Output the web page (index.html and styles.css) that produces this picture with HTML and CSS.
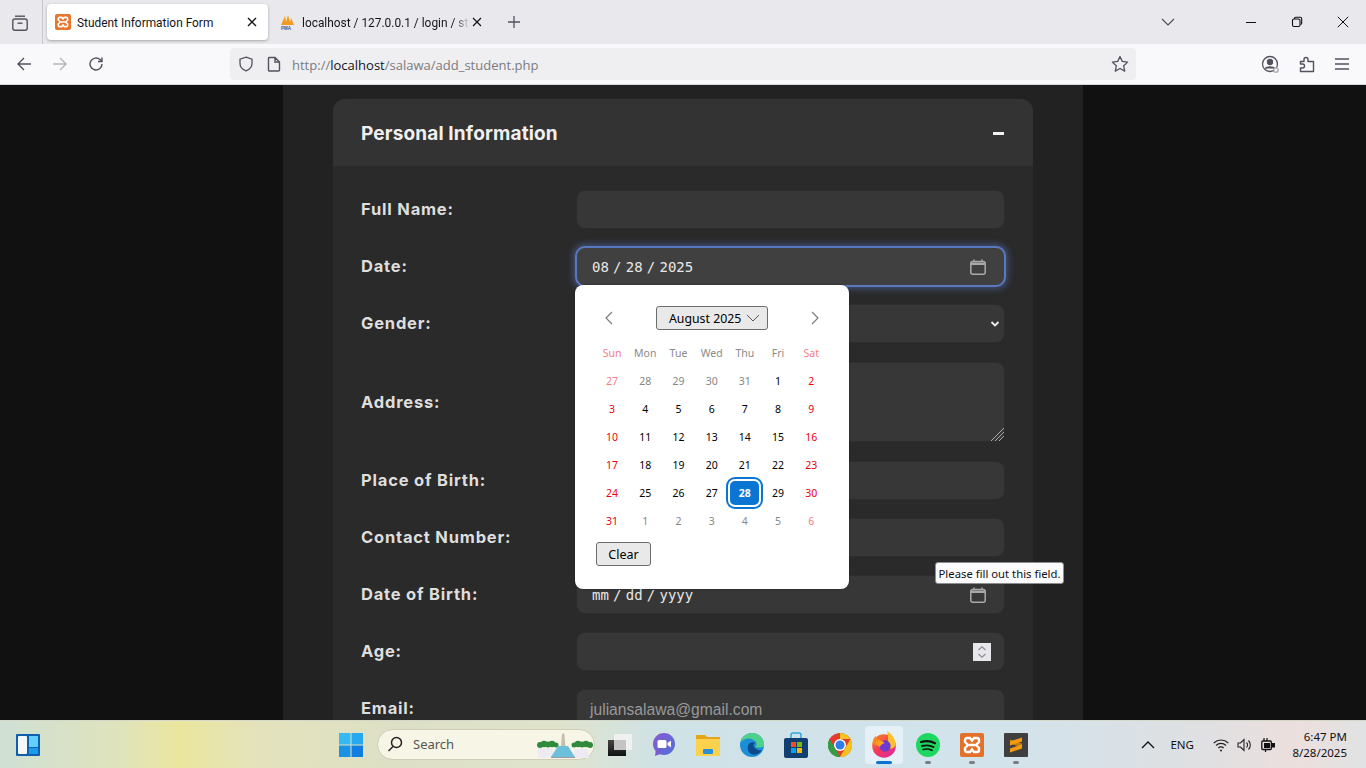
FILE: index.html
```html
<!DOCTYPE html>
<html lang="en">
<head>
<meta charset="utf-8">
<title>Student Information Form</title>
<link rel="stylesheet" href="styles.css">
</head>
<body>
<header class="tabbar">
  <div class="tabs-btn">
    <svg width="18" height="18" viewBox="0 0 18 18" fill="none" stroke="#52525e" stroke-width="1.4"><path d="M4 2.2h10"/><rect x="1.8" y="5" width="14.4" height="11.2" rx="2"/><path d="M6.5 9.2h5"/></svg>
  </div>
  <div class="tab active">
    <svg class="favicon" width="16" height="16" viewBox="0 0 24 24"><rect width="24" height="24" rx="3" fill="#e8762d"/><path d="M7 5h3l2 2.500L14 5h3a2 2 0 0 1 2 2v2l-3 3 3 3v2a2 2 0 0 1-2 2h-3l-2-2.500L10 19H7a2 2 0 0 1-2-2v-2l3-3-3-3V7a2 2 0 0 1 2-2zM9 12h6" fill="none" stroke="#fff" stroke-width="2.400"/></svg>
    <span class="tab-title">Student Information Form</span>
    <svg class="tab-x" width="10" height="10" viewBox="0 0 10 10" stroke="#15141a" stroke-width="1.400"><path d="M1 1l8 8M9 1l-8 8"/></svg>
  </div>
  <div class="tab plain">
    <svg class="favicon" width="16" height="16" viewBox="0 0 16 16"><path d="M1 11L5 2l1 6 2-7 2 7 1-4 3 7z" fill="#f29a1f"/><text x="1" y="15.500" class="pma">PMA</text></svg>
    <span class="tab-title clip">localhost / 127.0.0.1 / login / stu</span>
    <svg class="tab-x" width="10" height="10" viewBox="0 0 10 10" stroke="#15141a" stroke-width="1.200"><path d="M1 1l8 8M9 1l-8 8"/></svg>
  </div>
  <div class="newtab"><svg width="14" height="14" viewBox="0 0 14 14" stroke="#52525e" stroke-width="1.300"><path d="M7 1v12M1 7h12"/></svg></div>
  <div class="tabbar-fill"></div>
  <svg class="listall" width="14" height="8" viewBox="0 0 14 8" fill="none" stroke="#52525e" stroke-width="1.200"><path d="M1 1l6 6 6-6"/></svg>
  <div class="winctl">
    <svg width="12" height="12" viewBox="0 0 12 12" stroke="#111" stroke-width="1"><path d="M1 6.500h10"/></svg>
    <svg width="12" height="12" viewBox="0 0 12 12" fill="none" stroke="#111" stroke-width="1.100"><rect x="1.500" y="3" width="7.500" height="7.500" rx="1.500"/><path d="M3.500 3V2.500a1.200 1.200 0 0 1 1.200-1.200h4.500a1.500 1.500 0 0 1 1.500 1.500v4.500a1.200 1.200 0 0 1-1.200 1.200"/></svg>
    <svg width="12" height="12" viewBox="0 0 12 12" stroke="#111" stroke-width="1"><path d="M.8.800l10.400 10.400M11.200.800L.8 11.200"/></svg>
  </div>
</header>

<nav class="toolbar">
  <div class="navbtns">
    <svg width="16" height="16" viewBox="0 0 16 16" fill="none" stroke="#52525e" stroke-width="1.400"><path d="M15 8H2M8 2L2 8l6 6"/></svg>
    <svg width="16" height="16" viewBox="0 0 16 16" fill="none" stroke="#b4b4ba" stroke-width="1.400"><path d="M1 8h13M8 2l6 6-6 6"/></svg>
    <svg width="16" height="16" viewBox="0 0 16 16" fill="none" stroke="#52525e" stroke-width="1.400"><path d="M14 8a6 6 0 1 1-2-4.500L14 5.500M14 1.500v4h-4"/></svg>
  </div>
  <div class="urlbar">
    <svg class="shield" width="16" height="16" viewBox="0 0 16 16" fill="none" stroke="#52525e" stroke-width="1.300"><path d="M8 1.200l6 2v4.300c0 3.500-2.600 6-6 7.300-3.400-1.300-6-3.800-6-7.300V3.200z"/></svg>
    <svg class="page" width="14" height="16" viewBox="0 0 14 16" fill="none" stroke="#52525e" stroke-width="1.400"><path d="M2 1.500h6l4.500 4.500v8a1 1 0 0 1-1 1H2.500a1 1 0 0 1-1-1V2a.5.500 0 0 1 .5-.5zM8 1.500V6h4.500"/></svg>
    <span class="url">http://<b>localhost</b>/salawa/add_student.php</span>
    <svg class="star" width="18" height="18" viewBox="0 0 18 18" fill="none" stroke="#52525e" stroke-width="1.300" stroke-linejoin="round"><path d="M9 1.500l2.300 4.900 5.300.7-3.900 3.700 1 5.300L9 13.500l-4.700 2.600 1-5.300L1.400 7.100l5.300-.7z"/></svg>
  </div>
  <div class="tools">
    <svg width="18" height="18" viewBox="0 0 18 18" fill="none" stroke="#52525e" stroke-width="1.300"><circle cx="9" cy="9" r="7.500"/><circle cx="9" cy="7" r="2.500" fill="#52525e"/><path d="M4.500 13.500c1-2 8-2 9 0" fill="#52525e"/><circle cx="15" cy="15" r="2.200" fill="#f9f9fb" stroke="#a8a8ae"/></svg>
    <svg width="16" height="18" viewBox="0 0 16 18" fill="none" stroke="#52525e" stroke-width="1.400" stroke-linejoin="round"><path d="M1.500 6.500h3.500V4.500a2 2 0 0 1 4 0v2h5.500v10H1.500v-3.500h2a2 2 0 0 0 0-4h-2z"/></svg>
    <svg width="14" height="12" viewBox="0 0 14 12" stroke="#52525e" stroke-width="1.300"><path d="M0 1h14M0 6h14M0 11h14"/></svg>
  </div>
</nav>

<main class="viewport">
  <div class="container">
    <section class="card">
      <div class="card-head"><h2>Personal Information</h2><span class="collapse"></span></div>
      <form class="card-body">
        <div class="row"><label>Full Name:</label><div class="field"></div></div>
        <div class="row"><label>Date:</label><div class="field focused"><span class="dt">08 / 28 / 2025</span><svg class="cal" width="16" height="16" viewBox="0 0 16 16" fill="none" stroke="#a9a9a9" stroke-width="1.500"><rect x=".8" y="2.500" width="14.400" height="12.700" rx="2"/><path d="M1 3.500h14V6H1z" fill="#a9a9a9" stroke="none"/><path d="M4 .5v2.500M12 .5v2.500"/></svg></div></div>
        <div class="row gap-more"><label>Gender:</label><div class="field"><svg class="sel" width="10" height="8" viewBox="0 0 10 8" fill="none" stroke="#eee" stroke-width="1.800"><path d="M1.500 2L5 5.500 8.500 2"/></svg></div></div>
        <div class="row tall"><label>Address:</label><div class="field area"><svg class="grip" width="14" height="14" viewBox="0 0 14 14" stroke="#aaa" stroke-width="1"><path d="M1 14L14 1M5 14L14 5M9 14l5-5"/></svg></div></div>
        <div class="row"><label>Place of Birth:</label><div class="field"></div></div>
        <div class="row"><label>Contact Number:</label><div class="field"></div></div>
        <div class="row"><label>Date of Birth:</label><div class="field"><span class="dt">mm / dd / yyyy</span><svg class="cal" width="16" height="16" viewBox="0 0 16 16" fill="none" stroke="#a9a9a9" stroke-width="1.500"><rect x=".8" y="2.500" width="14.400" height="12.700" rx="2"/><path d="M1 3.500h14V6H1z" fill="#a9a9a9" stroke="none"/><path d="M4 .5v2.500M12 .5v2.500"/></svg></div></div>
        <div class="row"><label>Age:</label><div class="field"><span class="spin"><svg width="10" height="14" viewBox="0 0 10 14" fill="none" stroke="#8e8e96" stroke-width="1.300"><path d="M1.500 5L5 1.800 8.500 5M1.500 9L5 12.200 8.500 9"/></svg></span></div></div>
        <div class="row"><label>Email:</label><div class="field"><span class="ph">juliansalawa@gmail.com</span></div></div>
      </form>
    </section>
  </div>

  <div class="picker">
    <div class="pick-head">
      <svg width="9" height="14" viewBox="0 0 9 14" fill="none" stroke="#7c7c7c" stroke-width="1.200"><path d="M8 1L2 7l6 6"/></svg>
      <div class="month">August 2025<svg width="14" height="8" viewBox="0 0 14 8" fill="none" stroke="#555" stroke-width="1"><path d="M1 1l6 6 6-6"/></svg></div>
      <svg width="9" height="14" viewBox="0 0 9 14" fill="none" stroke="#7c7c7c" stroke-width="1.200"><path d="M1 1l6 6-6 6"/></svg>
    </div>
    <div class="cal-grid">
      <span class="dow we">Sun</span><span class="dow">Mon</span><span class="dow">Tue</span><span class="dow">Wed</span><span class="dow">Thu</span><span class="dow">Fri</span><span class="dow we">Sat</span>
      <span class="oe">27</span><span class="o">28</span><span class="o">29</span><span class="o">30</span><span class="o">31</span><span>1</span><span class="we">2</span>
      <span class="we">3</span><span>4</span><span>5</span><span>6</span><span>7</span><span>8</span><span class="we">9</span>
      <span class="we">10</span><span>11</span><span>12</span><span>13</span><span>14</span><span>15</span><span class="we">16</span>
      <span class="we">17</span><span>18</span><span>19</span><span>20</span><span>21</span><span>22</span><span class="we">23</span>
      <span class="we">24</span><span>25</span><span>26</span><span>27</span><span class="sel-day">28</span><span>29</span><span class="we">30</span>
      <span class="we">31</span><span class="o">1</span><span class="o">2</span><span class="o">3</span><span class="o">4</span><span class="o">5</span><span class="oe">6</span>
    </div>
    <div class="clear">Clear</div>
  </div>
  <div class="tooltip">Please fill out this field.</div>
</main>

<footer class="taskbar">
  <svg class="widgets" width="24" height="22" viewBox="0 0 24 22"><rect width="24" height="22" rx="1" fill="#0f5fae"/><rect x="2" y="2" width="9" height="18" rx="1" fill="#f5f7fa"/><rect x="13" y="2" width="9" height="11" fill="#63d0fb"/><rect x="13" y="14" width="9" height="6" fill="#1a9cec"/></svg>
  <div class="task-center">
    <svg class="winlogo" width="24" height="24" viewBox="0 0 24 24"><rect width="11.500" height="11.500" fill="#35b8f4"/><rect x="12.500" width="11.500" height="11.500" fill="#28a8ee"/><rect y="12.500" width="11.500" height="11.500" fill="#1a92e6"/><rect x="12.500" y="12.500" width="11.500" height="11.500" fill="#0f7ede"/></svg>
    <div class="search">
      <svg width="16" height="16" viewBox="0 0 16 16" fill="none" stroke="#222" stroke-width="1.500"><circle cx="9.500" cy="6.500" r="5"/><path d="M6 10.500L1.500 15"/></svg>
      <span>Search</span>
      <svg class="monument" width="56" height="28" viewBox="0 0 56 28"><path d="M25 3l1.200-1 1.200 1 1 13h-4.400z" fill="#c4bfae"/><g fill="#2f8a3e"><circle cx="3" cy="14" r="3"/><circle cx="7" cy="13" r="3.300"/><circle cx="11" cy="13.500" r="3"/><circle cx="15" cy="13" r="3.300"/><circle cx="19" cy="14" r="2.500"/><circle cx="37" cy="14" r="2.500"/><circle cx="41" cy="13" r="3.300"/><circle cx="45" cy="13.500" r="3"/><circle cx="49" cy="13" r="3.300"/><circle cx="53" cy="14" r="3"/></g><path d="M1 17h14l2 8-9 2H1zM38 18h12l2 9H36z" fill="#eeeaf2"/><path d="M21 15h10l7 11H14z" fill="#6cc0dc"/><path d="M14 26h24v1H14z" fill="#9a9aa0"/></svg>
    </div>
    <div class="ti"><svg width="24" height="22" viewBox="0 0 24 22"><defs><linearGradient id="snapd" x1="0" y1="0" x2="0" y2="1"><stop offset="0" stop-color="#444"/><stop offset="1" stop-color="#111"/></linearGradient></defs><rect x="6" width="18" height="16" fill="#f0f0f0"/><rect y="6" width="18" height="16" fill="url(#snapd)"/><rect x="6" y="6" width="12" height="10" fill="#c4c4c4"/></svg></div>
    <div class="ti"><svg width="24" height="24" viewBox="0 0 24 24"><defs><linearGradient id="meet" x1="0" y1="0" x2="1" y2="1"><stop offset="0" stop-color="#8a5bcf"/><stop offset="1" stop-color="#4f70d8"/></linearGradient></defs><circle cx="12" cy="11" r="11" fill="url(#meet)"/><path d="M4 16l-1 7 8-3z" fill="#7a5bd0"/><rect x="5.500" y="7" width="9" height="8" rx="1.500" fill="#fff"/><path d="M15.500 10l3.500-2.500v7L15.500 12z" fill="#fff"/></svg></div>
    <div class="ti"><svg width="24" height="22" viewBox="0 0 24 22"><path d="M0 1h9l2 2h13v5H0z" fill="#e6a417"/><path d="M0 5h24v17H0z" fill="#fbd24e"/><rect x="7" y="15" width="10" height="5" rx="1" fill="#2a8fd8"/></svg></div>
    <div class="ti"><svg width="24" height="24" viewBox="0 0 24 24"><circle cx="12" cy="12" r="12" fill="#1d8fd6"/><path d="M24 12c0-7-5-12-12-12C6 0 2 4 1 9c3-4 10-5 14-1 2 2 2 5 0 6 3 1 8 1 9-2z" fill="#4fd18b"/><path d="M8 13c0-3 5-5 8-3-3 0-3 3-1 5 2 2 5 3 7 2-2 4-8 6-11 4-3-2-4-5-3-8z" fill="#0c4a8c"/></svg></div>
    <div class="ti"><svg width="24" height="26" viewBox="0 0 24 26"><path d="M7 6V3a2 2 0 0 1 2-2h6a2 2 0 0 1 2 2v3" fill="none" stroke="#2ba8e0" stroke-width="1.500"/><rect y="6" width="24" height="20" rx="2" fill="#123f72"/><rect x="7" y="10" width="5" height="5" fill="#f25022"/><rect x="13" y="10" width="5" height="5" fill="#7fba00"/><rect x="7" y="16" width="5" height="5" fill="#00a4ef"/><rect x="13" y="16" width="5" height="5" fill="#ffb900"/></svg></div>
    <div class="ti"><svg width="24" height="24" viewBox="0 0 24 24"><circle cx="12" cy="12" r="12" fill="#e33b2e"/><path d="M12 0a12 12 0 0 1 10.400 6H12z" fill="#f6c21c"/><path d="M22.400 6A12 12 0 0 1 12 24l5.200-9z" fill="#f6c21c"/><path d="M12 24A12 12 0 0 1 1.600 6l5.200 9z" fill="#2f9e44"/><circle cx="12" cy="12" r="6" fill="#fff"/><circle cx="12" cy="12" r="4.500" fill="#2f7de8"/></svg></div>
    <div class="ti ff"><svg width="24" height="27" viewBox="0 0 24 27"><defs><linearGradient id="ffb" x1="0" y1="0" x2=".7" y2="1"><stop offset="0" stop-color="#fa8a1e"/><stop offset=".6" stop-color="#f2385d"/><stop offset="1" stop-color="#e22a9a"/></linearGradient></defs><circle cx="12" cy="15" r="11.800" fill="url(#ffb)"/><path d="M15 0c5 3 8.500 8 8.800 14-2 4-6 5-9 2 1.500-5 2-11 .2-16z" fill="#fbc02c"/><path d="M.5 13c0-4 1.500-6.500 3.500-8 0 2 1.500 3.500 5 3.500L7 15z" fill="#fb8a1e"/><circle cx="13" cy="15" r="5.700" fill="#6e3bd1"/><path d="M4 10.500c3-1.500 7-1 8.500 1.500-2 1-4.500 2-4.500 4-2-1-4-3-4-5.500z" fill="#fba11f"/></svg><i class="run"></i></div>
    <div class="ti"><svg width="24" height="24" viewBox="0 0 24 24"><circle cx="12" cy="12" r="12" fill="#1ed760"/><g fill="none" stroke="#111" stroke-linecap="round"><path d="M5 9c5-1.500 10-1 14 1.200" stroke-width="2.200"/><path d="M6 13c4-1 8-.8 11.500 1" stroke-width="1.900"/><path d="M7 16.500c3-.8 6-.6 9 .8" stroke-width="1.600"/></g></svg><i class="dot"></i></div>
    <div class="ti"><svg width="24" height="24" viewBox="0 0 24 24"><rect width="24" height="24" rx="2" fill="#e4702a"/><path d="M7 5h3l2 2.500L14 5h3a2 2 0 0 1 2 2v2l-3 3 3 3v2a2 2 0 0 1-2 2h-3l-2-2.500L10 19H7a2 2 0 0 1-2-2v-2l3-3-3-3V7a2 2 0 0 1 2-2zM9 12h6" fill="none" stroke="#fff" stroke-width="2.400"/></svg><i class="dot"></i></div>
    <div class="ti"><svg width="24" height="24" viewBox="0 0 24 24"><rect width="24" height="24" rx="1" fill="#3f3f3f"/><path d="M6 6.500l12 4v4L6 10.500z" fill="#c97b0c"/><path d="M6 8.500L18 4.500v4l-12 4zM6 15.500l12-4v4l-12 4z" fill="#f59b12"/></svg><i class="dot"></i></div>
  </div>
  <div class="tray">
    <svg width="14" height="9" viewBox="0 0 14 9" fill="none" stroke="#111" stroke-width="1.300"><path d="M1 8l6-6 6 6"/></svg>
    <span class="eng">ENG</span>
    <div class="sys">
      <svg width="16" height="14" viewBox="0 0 16 14" fill="none" stroke="#222" stroke-width="1.100"><path d="M.7 5a10.500 10.500 0 0 1 14.600 0M3 7.500a7 7 0 0 1 10 0M5.300 10a3.700 3.700 0 0 1 5.400 0"/><circle cx="8" cy="12.500" r="1" fill="#222" stroke="none"/></svg>
      <svg width="16" height="14" viewBox="0 0 16 14" fill="none" stroke="#222" stroke-width="1.100"><path d="M1 5v4h2.500L7 12.500v-11L3.500 5zM9.500 4.500a3.500 3.500 0 0 1 0 5M11.500 2.500a6.500 6.500 0 0 1 0 9"/></svg>
      <svg width="15" height="14" viewBox="0 0 15 14"><path d="M3 0v3M6 0v3" stroke="#111" stroke-width="1.200"/><rect x=".8" y="3" width="9.500" height="8.500" rx="1" fill="none" stroke="#111" stroke-width="1.300"/><rect x="3" y="5" width="6" height="5" fill="#111"/><rect x="10.500" y="5" width="3.500" height="4.500" fill="#111"/><path d="M4.500 11.500V14" stroke="#111" stroke-width="1.200"/></svg>
    </div>
    <div class="clock"><span>6:47 PM</span><span>8/28/2025</span></div>
  </div>
</footer>
</body>
</html>
```
FILE: styles.css
```css
* { box-sizing: border-box; }
html, body { margin: 0; height: 100%; overflow: hidden; }
body { width: 1366px; height: 768px; display: flex; flex-direction: column; font-family: "Noto Sans", "Open Sans", sans-serif; position: relative; }
svg { display: block; flex: none; }

.tabbar { height: 44px; background: #e9e9ed; display: flex; align-items: center; flex: none; font-family: Roboto, "Noto Sans", sans-serif; }
.tabs-btn { width: 43px; height: 44px; border-right: 1px solid #c6c6cb; display: flex; align-items: center; justify-content: center; padding: 1px 3px 0 0; margin-right: 4px; }
.tab { height: 36px; display: flex; align-items: center; border-radius: 4px; font-size: 11.900px; color: #15141a; position: relative; }
.tab.active { width: 221px; background: #fff; box-shadow: 0 1px 3px rgba(0,0,0,.3); padding: 0 11px 0 8px; }
.tab.plain { width: 218px; padding: 0 8px; margin-left: 4px; }
.favicon { margin-right: 6px; }
.tab-title { flex: 1; white-space: nowrap; overflow: hidden; padding-top: 1px; }
.clip { -webkit-mask-image: linear-gradient(90deg, #000 90%, transparent); mask-image: linear-gradient(90deg, #000 90%, transparent); }
.pma { font: bold 4.500px "Liberation Sans", sans-serif; fill: #2a5d9c; }
.tab-x { margin-left: 2px; }
.newtab { width: 30px; display: flex; justify-content: center; margin-left: 9px; }
.tabbar-fill { flex: 1; }
.listall { margin-right: 70px; }
.winctl { display: flex; gap: 34px; margin-right: 17px; align-items: center; }

.toolbar { height: 41px; background: #f9f9fb; border-bottom: 1px solid #d8d8dc; display: flex; align-items: center; flex: none; }
.navbtns { display: flex; gap: 20px; margin-left: 16px; width: 214px; }
.urlbar { width: 906px; height: 32px; background: #efeff2; border-radius: 4px; display: flex; align-items: center; padding: 0 7px 0 8px; }
.shield { margin-right: 13px; }
.page { margin-right: 11px; }
.url { font: 13.020px "Open Sans", sans-serif; color: #7b7b80; flex: 1; white-space: nowrap; padding-top: 1px; }
.url b { font-weight: 400; color: #15141a; }
.tools { display: flex; align-items: center; gap: 20px; margin-left: 125px; }

.viewport { flex: 1; background: #111; position: relative; overflow: hidden; }
.container { width: 800px; margin-left: 283px; height: 100%; background: #222; padding: 14px 50px 0; }
.card { background: #2a2a2a; border-radius: 12px 12px 0 0; }
.card-head { height: 67px; background: #333; border-radius: 12px 12px 0 0; display: flex; align-items: center; justify-content: space-between; padding: 0 29px 0 28px; }
.card-head h2 { margin: 1px 0 0; font: 700 19px "Inter", sans-serif; color: #f0f0f0; letter-spacing: .15px; }
.collapse { width: 11px; height: 3.500px; background: #f2f2f2; margin-top: 2px; }
.card-body { padding: 25px 29px 0 28px; }
.row { display: flex; align-items: center; height: 37px; margin-bottom: 20px; }
.row.gap-more { margin-bottom: 21px; }
.row.tall { height: 78px; margin-bottom: 21px; }
.row label { width: 216px; font: 700 16.500px "Inter", sans-serif; color: #dedede; letter-spacing: .8px; flex: none; padding-bottom: 1px; }
.field { width: 427px; height: 37px; background: #373737; box-shadow: 0 0 2px #353535; border-radius: 8px; display: flex; align-items: center; padding: 0 18px 0 15px; position: relative; flex: none; }
.field.area { height: 78px; }
.field.focused { height: 41px; width: 431px; margin-left: -2px; background: #404040; border: 2px solid #5a78c0; border-radius: 10px; box-shadow: 0 0 6px 2px rgba(90,120,192,.5); padding: 0 18px 0 15px; }
.dt { font: 14px "DejaVu Sans Mono", monospace; word-spacing: -4.200px; color: #e8e8e8; flex: 1; margin-top: 1px; }
.cal { margin-left: auto; }
.sel { margin-left: auto; margin-right: -14px; }
.grip { position: absolute; right: 0; bottom: 0; }
.spin { margin-left: auto; width: 18px; height: 18px; background: #e8e8ec; display: flex; align-items: center; justify-content: center; margin-right: -5px; }
.ph { font: 15.650px "Liberation Sans", sans-serif; color: #9a9a9a; margin-left: -2px; margin-top: 2px; }

.picker { position: absolute; left: 575px; top: 200px; width: 274px; height: 304px; background: #fff; border-radius: 8px; padding: 21px 21px 0; color: #000; box-shadow: 0 0 2px rgba(0,0,0,.4); }
.pick-head { display: flex; align-items: center; justify-content: space-between; height: 24px; padding: 0 8px; }
.month { width: 112px; height: 24px; background: #e9e9e9; border: 1px solid #6c6c6c; border-radius: 3px; display: flex; align-items: center; justify-content: space-between; padding: 0 7px 0 12px; font-size: 12.300px; }
.cal-grid { display: grid; grid-template-columns: repeat(7, 33.200px); grid-auto-rows: 28px; margin: 9px 0 0 -.500px; font-size: 10.500px; text-align: center; line-height: 28px; }
.cal-grid span { display: block; }
.cal-grid .dow { color: #8a8a8a; }
.cal-grid .we { color: #ee0010; }
.cal-grid .dow.we { color: #f57d86; }
.cal-grid .o { color: #868686; }
.cal-grid .oe { color: #f57d86; }
.cal-grid .sel-day { background: #0a75d2; color: #fff; font-weight: 700; border-radius: 5px; box-shadow: 0 0 0 2px #fff, 0 0 0 4px #0a75d2; margin: 2px 2px 0; height: 24px; line-height: 24px; }
.clear { width: 55px; height: 24px; margin-top: 7px; background: #e9e9e9; border: 1px solid #6c6c6c; border-radius: 3px; display: flex; align-items: center; justify-content: center; font-size: 12.500px; }
.tooltip { position: absolute; left: 935px; top: 477px; height: 22px; width: 129px; background: #fbfbfe; border: 1px solid #8d8d8d; border-radius: 3px; color: #111; font-size: 11.300px; display: flex; align-items: center; justify-content: center; white-space: nowrap; }

.taskbar { height: 48px; flex: none; display: flex; align-items: center; position: relative; border-top: 1px solid #d3d8c8; background: linear-gradient(90deg, #cfe0d4 0, #dfe3bc 120px, #ebe69e 180px, #e3e2bc 260px, #dde0c6 400px, #dfe3cc 560px, #cfe2e6 660px, #d2e3ec 1000px, #dfe0e2 1200px, #ecdfdd 1300px, #e0e2e4 1366px); }
.widgets { margin-left: 16px; }
.task-center { position: absolute; left: 339px; top: 0; height: 47px; display: flex; align-items: center; }
.winlogo { margin-right: 14px; }
.search { width: 218px; height: 31px; margin-right: 3px; background: #f6f5e6; border: 1px solid #cdcdb8; border-radius: 16px; display: flex; align-items: center; padding: 0 0 1px 9px; font-size: 13px; color: #555; position: relative; }
.search span { margin-left: 10px; }
.monument { position: absolute; right: 1px; bottom: 0; }
.ti { width: 44px; height: 44px; display: flex; align-items: center; justify-content: center; position: relative; }
.ti.ff { width: 38px; height: 38px; margin: 0 3px; background: #e6f1f7; border-radius: 4px; }
.run { position: absolute; left: 11px; bottom: 0; width: 16px; height: 3px; background: #0a74d0; border-radius: 2px; }
.dot { position: absolute; left: 19px; bottom: 3px; width: 6px; height: 3px; background: #7a7f82; border-radius: 2px; }
.tray { position: absolute; right: 0; top: 0; height: 47px; display: flex; align-items: center; font-size: 11.500px; color: #111; }
.eng { margin-left: 15px; width: 43px; }
.sys { display: flex; align-items: center; gap: 8px; }
.clock { display: flex; flex-direction: column; align-items: flex-end; margin: 0 19px 0 16px; line-height: 16px; }
```
